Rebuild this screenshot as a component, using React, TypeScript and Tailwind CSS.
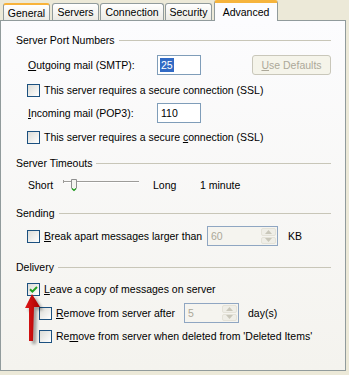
import React from "react";

const U = ({ children }: { children: React.ReactNode }) => (
  <span className="underline underline-offset-[1px] decoration-[1px]">{children}</span>
);

const Check = ({ checked }: { checked?: boolean }) => (
  <span className="w-[13px] h-[13px] shrink-0 border border-[#1C5180] bg-gradient-to-br from-[#DCDCD7] to-white flex items-center justify-center">
    {checked && (
      <svg width="9" height="9" viewBox="0 0 9 9">
        <path d="M1 4.2 L3.4 6.6 L8 2" stroke="#21A121" strokeWidth="2" fill="none" />
      </svg>
    )}
  </span>
);

const Group = ({ title }: { title: string }) => (
  <div className="flex items-center h-[14px] gap-[4px]">
    <span>{title}</span>
    <div className="flex-1 h-px bg-[#C8C6B8]" />
  </div>
);

const Spin = ({ value, w }: { value: string; w: string }) => (
  <div className={`${w} h-[20px] border border-[#8FA6C2] bg-[#F5F4EF] flex items-center pl-[3px] pr-[1px]`}>
    <span className="flex-1 text-[#ACA899]">{value}</span>
    <div className="w-[15px] h-[16px] flex flex-col gap-px">
      <div className="flex-1 bg-[#EFEEE7] border border-[#E4E2D8] rounded-[2px] flex items-center justify-center">
        <svg width="7" height="4" viewBox="0 0 7 4">
          <path d="M0 4 L3.5 0 L7 4 Z" fill="#C9C7BA" />
        </svg>
      </div>
      <div className="flex-1 bg-[#EFEEE7] border border-[#E4E2D8] rounded-[2px] flex items-center justify-center">
        <svg width="7" height="4" viewBox="0 0 7 4">
          <path d="M0 0 L3.5 4 L7 0 Z" fill="#C9C7BA" />
        </svg>
      </div>
    </div>
  </div>
);

const Tab = ({ label, w, ml, hover }: { label: string; w: string; ml: string; hover?: boolean }) => (
  <div
    className={`${w} ${ml} h-[17px] border border-b-0 border-[#919B9C] rounded-t-[3px] bg-gradient-to-b from-white to-[#ECEBE5] flex items-center justify-center ${
      hover ? "border-t-2 border-t-[#F8B33A]" : ""
    }`}
  >
    <span className="pt-[1px]">{label}</span>
  </div>
);

export default function App() {
  return (
    <div
      className="w-[349px] h-[375px] bg-[#ECE9D8] relative overflow-hidden text-[10.5px] text-black leading-none"
      style={{ fontFamily: '"Liberation Sans", Arial, sans-serif' }}
    >
      <div className="flex items-end h-[20px]">
        <Tab label="General" w="w-[47px]" ml="ml-[3px]" hover />
        <Tab label="Servers" w="w-[47px]" ml="ml-[2px]" />
        <Tab label="Connection" w="w-[64px]" ml="ml-[1px]" />
        <Tab label="Security" w="w-[47px]" ml="ml-[1px]" />
        <div className="relative z-10 ml-[2px] mb-[-1px] w-[64px] h-[21px] border-x border-[#919B9C] border-t-[3px] border-t-[#F6B43C] rounded-t-[3px] bg-[#FCFCFE] flex justify-center pt-[4px]">
          <span>Advanced</span>
        </div>
      </div>

      <div className="w-[346px] h-[351px] border border-[#919B9C] bg-gradient-to-b from-[#FCFCFE] to-[#F4F3EE] pl-[15px] pr-[14px] pt-[12px] flex flex-col">
        <Group title="Server Port Numbers" />

        <div className="mt-[8px] h-[20px] flex items-center">
          <span className="ml-[12px] w-[129px]">
            <U>O</U>utgoing mail (SMTP):
          </span>
          <div className="w-[44px] h-[20px] border border-[#7F9DB9] bg-white flex items-center pl-[2px]">
            <span className="bg-[#316AC5] text-white px-px py-[2px]">25</span>
          </div>
          <div className="ml-auto w-[79px] h-[20px] border border-[#C9C7BA] rounded-[3px] bg-[#F5F4EA] flex items-center justify-center text-[#ACA899]">
            <span>
              <U>U</U>se Defaults
            </span>
          </div>
        </div>

        <div className="mt-[8px] h-[14px] flex items-center ml-[11px] gap-[4px]">
          <Check />
          <span>This server requires a secure connection (SSL)</span>
        </div>

        <div className="mt-[6px] h-[20px] flex items-center">
          <span className="ml-[12px] w-[129px]">
            <U>I</U>ncoming mail (POP3):
          </span>
          <div className="w-[44px] h-[20px] border border-[#7F9DB9] bg-white flex items-center pl-[3px]">
            <span>110</span>
          </div>
        </div>

        <div className="mt-[7px] h-[14px] flex items-center ml-[11px] gap-[4px]">
          <Check />
          <span>
            This server requires a secure <U>c</U>onnection (SSL)
          </span>
        </div>

        <div className="mt-[12px]">
          <Group title="Server Timeouts" />
        </div>

        <div className="mt-[7px] h-[16px] flex items-center">
          <span className="ml-[12px] w-[35px]">Short</span>
          <svg width="76" height="14" viewBox="0 0 76 14">
            <rect x="0" y="3" width="76" height="1" fill="#9D9C99" />
            <rect x="0" y="4" width="76" height="1" fill="#FFFFFF" />
            <rect x="0" y="2" width="1" height="3" fill="#9D9C99" />
            <path d="M8.5 1.5 H13.5 V10 L11 12.5 L8.5 10 Z" fill="#F4F4F0" stroke="#8E8F8F" />
            <path d="M9 10.5 L11 12.5 L13 10.5" stroke="#21A121" fill="none" strokeWidth="1.2" />
          </svg>
          <span className="ml-[14px] w-[47px]">Long</span>
          <span>1 minute</span>
        </div>

        <div className="mt-[13px]">
          <Group title="Sending" />
        </div>

        <div className="mt-[6px] h-[20px] flex items-center ml-[11px]">
          <Check />
          <span className="ml-[4px] w-[163px]">
            <U>B</U>reak apart messages larger than
          </span>
          <Spin value="60" w="w-[71px]" />
          <span className="ml-[10px]">KB</span>
        </div>

        <div className="mt-[14px]">
          <Group title="Delivery" />
        </div>

        <div className="mt-[8px] h-[14px] flex items-center ml-[11px] gap-[4px]">
          <Check checked />
          <span>
            <U>L</U>eave a copy of messages on server
          </span>
        </div>

        <div className="mt-[7px] h-[20px] flex items-center ml-[23px]">
          <Check />
          <span className="ml-[4px] w-[128px]">
            <U>R</U>emove from server after
          </span>
          <Spin value="5" w="w-[55px]" />
          <span className="ml-[9px]">day(s)</span>
        </div>

        <div className="mt-[6px] h-[14px] flex items-center ml-[23px] gap-[4px]">
          <Check />
          <span>
            Re<U>m</U>ove from server when deleted from 'Deleted Items'
          </span>
        </div>
      </div>

      <svg className="absolute left-[20px] top-[288px]" width="30" height="60" viewBox="0 0 30 60">
        <defs>
          <filter id="sh" x="-50%" y="-50%" width="200%" height="200%">
            <feGaussianBlur stdDeviation="1.5" />
          </filter>
          <linearGradient id="rg" x1="0" x2="1" y1="0" y2="0">
            <stop offset="0" stopColor="#E01818" />
            <stop offset="1" stopColor="#A80000" />
          </linearGradient>
        </defs>
        <polygon
          points="12,6 5,20 9,20 9,53 13,53 14,19 20,19"
          transform="translate(3,3)"
          fill="#000"
          opacity="0.35"
          filter="url(#sh)"
        />
        <polygon points="12,6 5,20 9,20 9,53 13,53 14,19 20,19" fill="url(#rg)" />
      </svg>
    </div>
  );
}
